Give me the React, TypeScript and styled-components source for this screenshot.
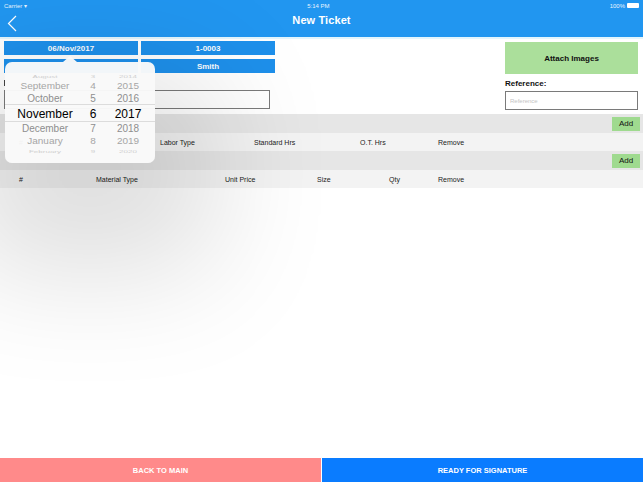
import styled, { createGlobalStyle } from 'styled-components';

const GlobalStyle = createGlobalStyle`
  html, body { margin: 0; padding: 0; background: #fff; }
  body {
    font-family: 'Liberation Sans', Arial, sans-serif;
    -webkit-font-smoothing: antialiased;
  }
`;

const laborCols = [
  { label: '#', w: 77 },
  { label: '', w: 64 },
  { label: 'Labor Type', w: 94 },
  { label: 'Standard Hrs', w: 106 },
  { label: 'O.T. Hrs', w: 78 },
  { label: 'Remove', w: 60 },
];

const materialCols = [
  { label: '#', w: 77 },
  { label: 'Material Type', w: 129 },
  { label: 'Unit Price', w: 92 },
  { label: 'Size', w: 72 },
  { label: 'Qty', w: 49 },
  { label: 'Remove', w: 60 },
];

// wheel rows: offset from the selected row
const wheel = [
  { m: 'August', d: '3', y: '2014', off: -3, h: 10 },
  { m: 'September', d: '4', y: '2015', off: -2, h: 11 },
  { m: 'October', d: '5', y: '2016', off: -1, h: 13 },
  { m: 'November', d: '6', y: '2017', off: 0, h: 17 },
  { m: 'December', d: '7', y: '2018', off: 1, h: 13 },
  { m: 'January', d: '8', y: '2019', off: 2, h: 12 },
  { m: 'February', d: '9', y: '2020', off: 3, h: 9 },
];

export default function App() {
  return (
    <Page>
      <GlobalStyle />
      <Header>
        <StatusBar>
          <span>Carrier <Wifi>▾</Wifi></span>
          <span>5:14 PM</span>
          <Battery>100% <BatteryIcon /></Battery>
        </StatusBar>
        <NavRow>
          <Back>
            <svg width="10" height="17" viewBox="0 0 10 17" fill="none" stroke="#fff" strokeWidth="1.2">
              <polyline points="9,1 1.5,8.5 9,16" />
            </svg>
          </Back>
          <Title>New Ticket</Title>
        </NavRow>
      </Header>
      <Divider />

      <Main>
        <FormArea>
          <LeftCol>
            <BtnGrid>
              <BlueBtn>06/Nov/2017</BlueBtn>
              <BlueBtn>1-0003</BlueBtn>
              <BlueBtn />
              <BlueBtn>Smith</BlueBtn>
            </BtnGrid>
            <Label><Tick /></Label>
            <TextBox />
          </LeftCol>
          <RightCol>
            <AttachBtn>Attach Images</AttachBtn>
            <Label>Reference:</Label>
            <TextBox placeholder="Reference" />
          </RightCol>
        </FormArea>

        <Band>
          <AddBtn>Add</AddBtn>
        </Band>
        <HeadRow>
          {laborCols.map((c, i) => (
            <Cell key={i} $w={c.w}>{c.label}</Cell>
          ))}
        </HeadRow>
        <Band>
          <AddBtn>Add</AddBtn>
        </Band>
        <HeadRow>
          {materialCols.map((c, i) => (
            <Cell key={i} $w={c.w}>{c.label}</Cell>
          ))}
        </HeadRow>

        <Spacer />

        <Footer>
          <FootBtn $bg="#ff8a8a">BACK TO MAIN</FootBtn>
          <FootBtn $bg="#0a7cff">READY FOR SIGNATURE</FootBtn>
        </Footer>

        <Popover>
          <Arrow />
          <Wheel>
            <SelLine $top={33} />
            <SelLine $top={50} />
            {wheel.map(r => (
              <WheelRow key={r.m} $h={r.h} $off={r.off}>
                <span>{r.m}</span>
                <span>{r.d}</span>
                <span>{r.y}</span>
              </WheelRow>
            ))}
          </Wheel>
        </Popover>
      </Main>
    </Page>
  );
}

/* ═══ Layout ═══ */

const Page = styled.div`
  height: 100vh;
  display: flex;
  flex-direction: column;
  overflow: hidden;
`;

const Header = styled.header`
  background: #2196f0;
  color: #fff;
  height: 37px;
  flex-shrink: 0;
`;

const StatusBar = styled.div`
  display: flex;
  justify-content: space-between;
  align-items: center;
  height: 11px;
  padding: 0 4px;
  font-size: 6px;
  color: #e8f4ff;
`;

const Wifi = styled.span`
  font-size: 6px;
`;

const Battery = styled.span`
  display: flex;
  align-items: center;
  gap: 2px;
`;

const BatteryIcon = styled.span`
  width: 12px;
  height: 5px;
  background: #fff;
  border-radius: 1px;
`;

const NavRow = styled.div`
  position: relative;
  display: flex;
  align-items: center;
  justify-content: center;
  height: 18px;
`;

const Back = styled.div`
  position: absolute;
  left: 7px;
  top: 4px;
  display: flex;
`;

const Title = styled.div`
  font-size: 11px;
  font-weight: 700;
  letter-spacing: 0.1px;
`;

const Divider = styled.div`
  height: 2px;
  background: #e3f5fd;
  flex-shrink: 0;
`;

const Main = styled.main`
  position: relative;
  flex: 1;
  display: flex;
  flex-direction: column;
`;

/* ═══ Form ═══ */

const FormArea = styled.div`
  display: flex;
  justify-content: space-between;
  padding: 2px 5px 4px 4px;
`;

const LeftCol = styled.div`
  display: flex;
  flex-direction: column;
  width: 266px;
`;

const BtnGrid = styled.div`
  display: grid;
  grid-template-columns: 134px 134px;
  grid-auto-rows: 14px;
  column-gap: 3px;
  row-gap: 4px;
`;

const BlueBtn = styled.div`
  background: #1e90eb;
  color: #fff;
  font-size: 8px;
  font-weight: 700;
  display: flex;
  align-items: center;
  justify-content: center;
`;

const RightCol = styled.div`
  display: flex;
  flex-direction: column;
  width: 133px;
`;

const AttachBtn = styled.div`
  height: 32px;
  margin-top: 1px;
  background: #abdf9b;
  color: #111;
  font-size: 8px;
  font-weight: 700;
  display: flex;
  align-items: center;
  justify-content: center;
`;

const Label = styled.div`
  font-size: 8px;
  font-weight: 700;
  color: #111;
  margin: 5px 0 3px;
  height: 9px;
  display: flex;
  align-items: center;
`;

const Tick = styled.span`
  width: 1px;
  height: 6px;
  background: #444;
`;

const TextBox = styled.input`
  box-sizing: border-box;
  height: 19px;
  width: 100%;
  border: 1px solid #7a7a7a;
  background: #fff;
  padding: 0 4px;
  font-family: inherit;
  font-size: 6px;
  outline: none;
  &::placeholder { color: #c4c4c4; }
`;

/* ═══ Tables ═══ */

const Band = styled.div`
  height: 19px;
  background: #e6e6e6;
  display: flex;
  align-items: center;
  justify-content: flex-end;
  padding-right: 3px;
`;

const AddBtn = styled.div`
  width: 28px;
  height: 14px;
  background: #9fda8f;
  color: #111;
  font-size: 8px;
  display: flex;
  align-items: center;
  justify-content: center;
`;

const HeadRow = styled.div`
  height: 18px;
  background: #f3f3f3;
  display: flex;
  align-items: center;
  padding-left: 19px;
  font-size: 7px;
  color: #222;
`;

const Cell = styled.div<{ $w: number }>`
  width: ${p => p.$w}px;
  flex-shrink: 0;
`;

const Spacer = styled.div`
  flex: 1;
`;

const Footer = styled.footer`
  display: flex;
  gap: 1px;
  height: 24px;
  background: #fff;
  position: relative;
  z-index: 1;
`;

const FootBtn = styled.div<{ $bg: string }>`
  flex: 1;
  background: ${p => p.$bg};
  color: #fff;
  font-size: 7.5px;
  font-weight: 700;
  display: flex;
  align-items: center;
  justify-content: center;
`;

/* ═══ Date popover ═══ */

const Popover = styled.div`
  position: absolute;
  left: 5px;
  top: 23px;
  width: 150px;
  height: 101px;
  background: rgba(249, 249, 249, 0.97);
  border-radius: 7px;
  box-shadow: 10px 60px 120px 50px rgba(0, 0, 0, 0.13);
`;

const Arrow = styled.div`
  position: absolute;
  left: 58px;
  top: -6px;
  width: 0;
  height: 0;
  border-left: 7px solid transparent;
  border-right: 7px solid transparent;
  border-bottom: 6px solid rgba(249, 249, 249, 0.97);
`;

const Wheel = styled.div`
  position: relative;
  padding-top: 9px;
  overflow: hidden;
  height: 92px;
`;

const SelLine = styled.div<{ $top: number }>`
  position: absolute;
  left: 0;
  right: 0;
  top: ${p => p.$top + 9}px;
  height: 1px;
  background: #dcdcdc;
`;

const WheelRow = styled.div<{ $h: number; $off: number }>`
  display: grid;
  grid-template-columns: 80px 16px 1fr;
  align-items: center;
  height: ${p => p.$h}px;
  font-family: 'Liberation Sans', Arial, sans-serif;
  font-size: ${p => (p.$off === 0 ? 12 : Math.abs(p.$off) === 3 ? 8 : 10)}px;
  color: ${p =>
    p.$off === 0 ? '#000' : Math.abs(p.$off) === 1 ? '#8e8e8e' : Math.abs(p.$off) === 2 ? '#a6a6a6' : '#cfcfcf'};
  transform: scaleY(${p => (Math.abs(p.$off) === 3 ? 0.55 : Math.abs(p.$off) === 2 ? 0.85 : 1)});

  span {
    text-align: center;
  }
`;
